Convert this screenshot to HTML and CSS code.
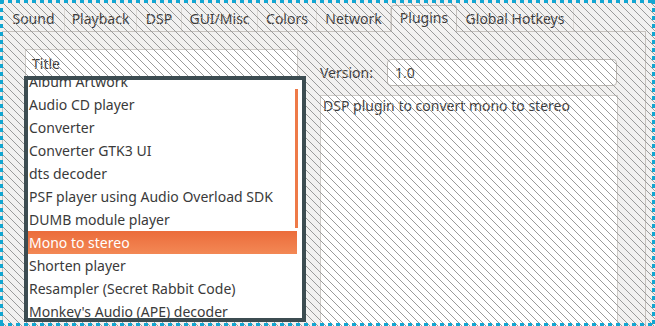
FILE: index.html
```html
<!DOCTYPE html>
<html lang="en">
  <head>
    <meta charset="UTF-8" />
    <title>Preferences - Plugins</title>
    <link rel="stylesheet" href="styles.css">
  </head>
  <body>
    <div class="window">
      <div class="tabs">
        <div class="tab tab-sound">Sound</div>
        <div class="tab tab-playback">Playback</div>
        <div class="tab tab-dsp">DSP</div>
        <div class="tab tab-gui">GUI/Misc</div>
        <div class="tab tab-colors">Colors</div>
        <div class="tab tab-network">Network</div>
        <div class="tab tab-plugins active">Plugins</div>
        <div class="tab tab-hotkeys">Global Hotkeys</div>
      </div>

      <div class="page">
        <div class="plugin-list">
          <div class="list-header">Title</div>
          <div class="list-box">
            <ul class="rows">
              <li>Album Artwork</li>
              <li>Audio CD player</li>
              <li>Converter</li>
              <li>Converter GTK3 UI</li>
              <li>dts decoder</li>
              <li>PSF player using Audio Overload SDK</li>
              <li>DUMB module player</li>
              <li class="selected">Mono to stereo</li>
              <li>Shorten player</li>
              <li>Resampler (Secret Rabbit Code)</li>
              <li>Monkey's Audio (APE) decoder</li>
            </ul>
            <div class="scrollbar"></div>
          </div>
        </div>

        <div class="plugin-info">
          <div class="version-row">
            <label for="version">Version:</label>
            <input type="text" id="version" value="1.0" readonly />
          </div>
          <div class="description">DSP plugin to convert mono to stereo</div>
        </div>
      </div>

      <!-- hatch laid over the whole window, except the focused list -->
      <svg class="hatch" width="655" height="326">
        <defs>
          <pattern id="diag" width="8" height="8" patternUnits="userSpaceOnUse">
            <rect x="0" y="0" width="1" height="1" />
            <rect x="1" y="1" width="1" height="1" />
            <rect x="2" y="2" width="1" height="1" />
            <rect x="3" y="3" width="1" height="1" />
            <rect x="4" y="4" width="1" height="1" />
            <rect x="5" y="5" width="1" height="1" />
            <rect x="6" y="6" width="1" height="1" />
            <rect x="7" y="7" width="1" height="1" />
          </pattern>
        </defs>
        <rect width="100%" height="100%" fill="url(#diag)" />
      </svg>

      <div class="frame"></div>
    </div>
  </body>
</html>
```

FILE: styles.css
```css
body {
  margin: 0;
  font-family: "Noto Sans", "DejaVu Sans", sans-serif;
  font-size: 14px;
  color: #3a3a3a;
}

.window {
  position: relative;
  width: 655px;
  height: 326px;
  overflow: hidden;
  background: #f2f1f0;
  display: flex;
  flex-direction: column;
}

/* tabs */

.tabs {
  display: flex;
  align-items: flex-end;
  height: 31px;
  padding-left: 3px;
}

.tab {
  height: 23px;
  line-height: 22px;
  text-align: center;
  border-right: 1px solid #dcd9d5;
  box-sizing: border-box;
}

.tab-sound { width: 62px; }
.tab-playback { width: 72px; }
.tab-dsp { width: 45px; }
.tab-gui { width: 76px; }
.tab-colors { width: 59px; }
.tab-network { width: 74px; }
.tab-plugins { width: 66px; }
.tab-hotkeys { width: 117px; }

.tab.active {
  position: relative;
  height: 27px;
  line-height: 24px;
  margin-bottom: -1px;
  background: #f4f3f2;
  border: 1px solid #c6c2be;
  border-bottom: none;
  border-radius: 3px 3px 0 0;
  z-index: 1;
}

/* notebook page */

.page {
  flex: 1;
  display: flex;
  gap: 14px;
  margin: 0 9px 0 2px;
  padding: 17px 27px 0 21px;
  border: 1px solid #c6c2be;
  border-bottom: none;
  background: #f2f1f0;
}

.plugin-list {
  width: 282px;
  display: flex;
  flex-direction: column;
}

.list-header {
  height: 27px;
  line-height: 28px;
  margin: 0 8px 0 1px;
  padding-left: 6px;
  background: #fff;
  border: 1px solid #cfccc8;
  border-bottom: none;
  box-sizing: border-box;
}

.list-box {
  position: relative;
  z-index: 2;
  height: 246px;
  box-sizing: border-box;
  border: 4px solid #3c4c51;
  background: #fff;
  overflow: hidden;
}

.rows {
  list-style: none;
  margin: -10px 0 0 0;
  padding: 0;
}

.rows li {
  height: 23px;
  line-height: 23px;
  padding-left: 1px;
  margin-right: 5px;
  white-space: nowrap;
}

.rows li.selected {
  color: #fff;
  background: linear-gradient(#eb6c3b, #f38855);
}

.scrollbar {
  position: absolute;
  top: 9px;
  right: 4px;
  width: 3px;
  height: 139px;
  background: #ee7a48;
}

.plugin-info {
  flex: 1;
  display: flex;
  flex-direction: column;
}

.version-row {
  display: flex;
  align-items: center;
  margin-top: 10px;
}

.version-row label {
  width: 67px;
}

.version-row input {
  width: 230px;
  height: 27px;
  box-sizing: border-box;
  padding: 0 7px;
  font: inherit;
  color: inherit;
  background: #fff;
  border: 1px solid #bdb9b4;
  border-radius: 4px;
  outline: none;
}

.description {
  flex: 1;
  width: 298px;
  margin-top: 9px;
  padding: 1px 2px;
  line-height: 17px;
  box-sizing: border-box;
  background: #fff;
  border: 1px solid #cfccc8;
  border-bottom: none;
}

/* overlays */

.hatch {
  position: absolute;
  top: 0;
  left: 0;
  z-index: 1;
  fill: #9a9a9a;
  pointer-events: none;
}

.frame {
  position: absolute;
  inset: 0;
  z-index: 3;
  pointer-events: none;
  background:
    repeating-linear-gradient(90deg, #12a6d2 0 4px, transparent 4px 8px) top left / 100% 3px no-repeat,
    repeating-linear-gradient(90deg, #12a6d2 0 4px, transparent 4px 8px) bottom left / 100% 3px no-repeat,
    repeating-linear-gradient(180deg, #12a6d2 0 4px, transparent 4px 8px) top left / 3px 100% no-repeat,
    repeating-linear-gradient(180deg, #12a6d2 0 4px, transparent 4px 8px) top right / 3px 100% no-repeat;
}
```
